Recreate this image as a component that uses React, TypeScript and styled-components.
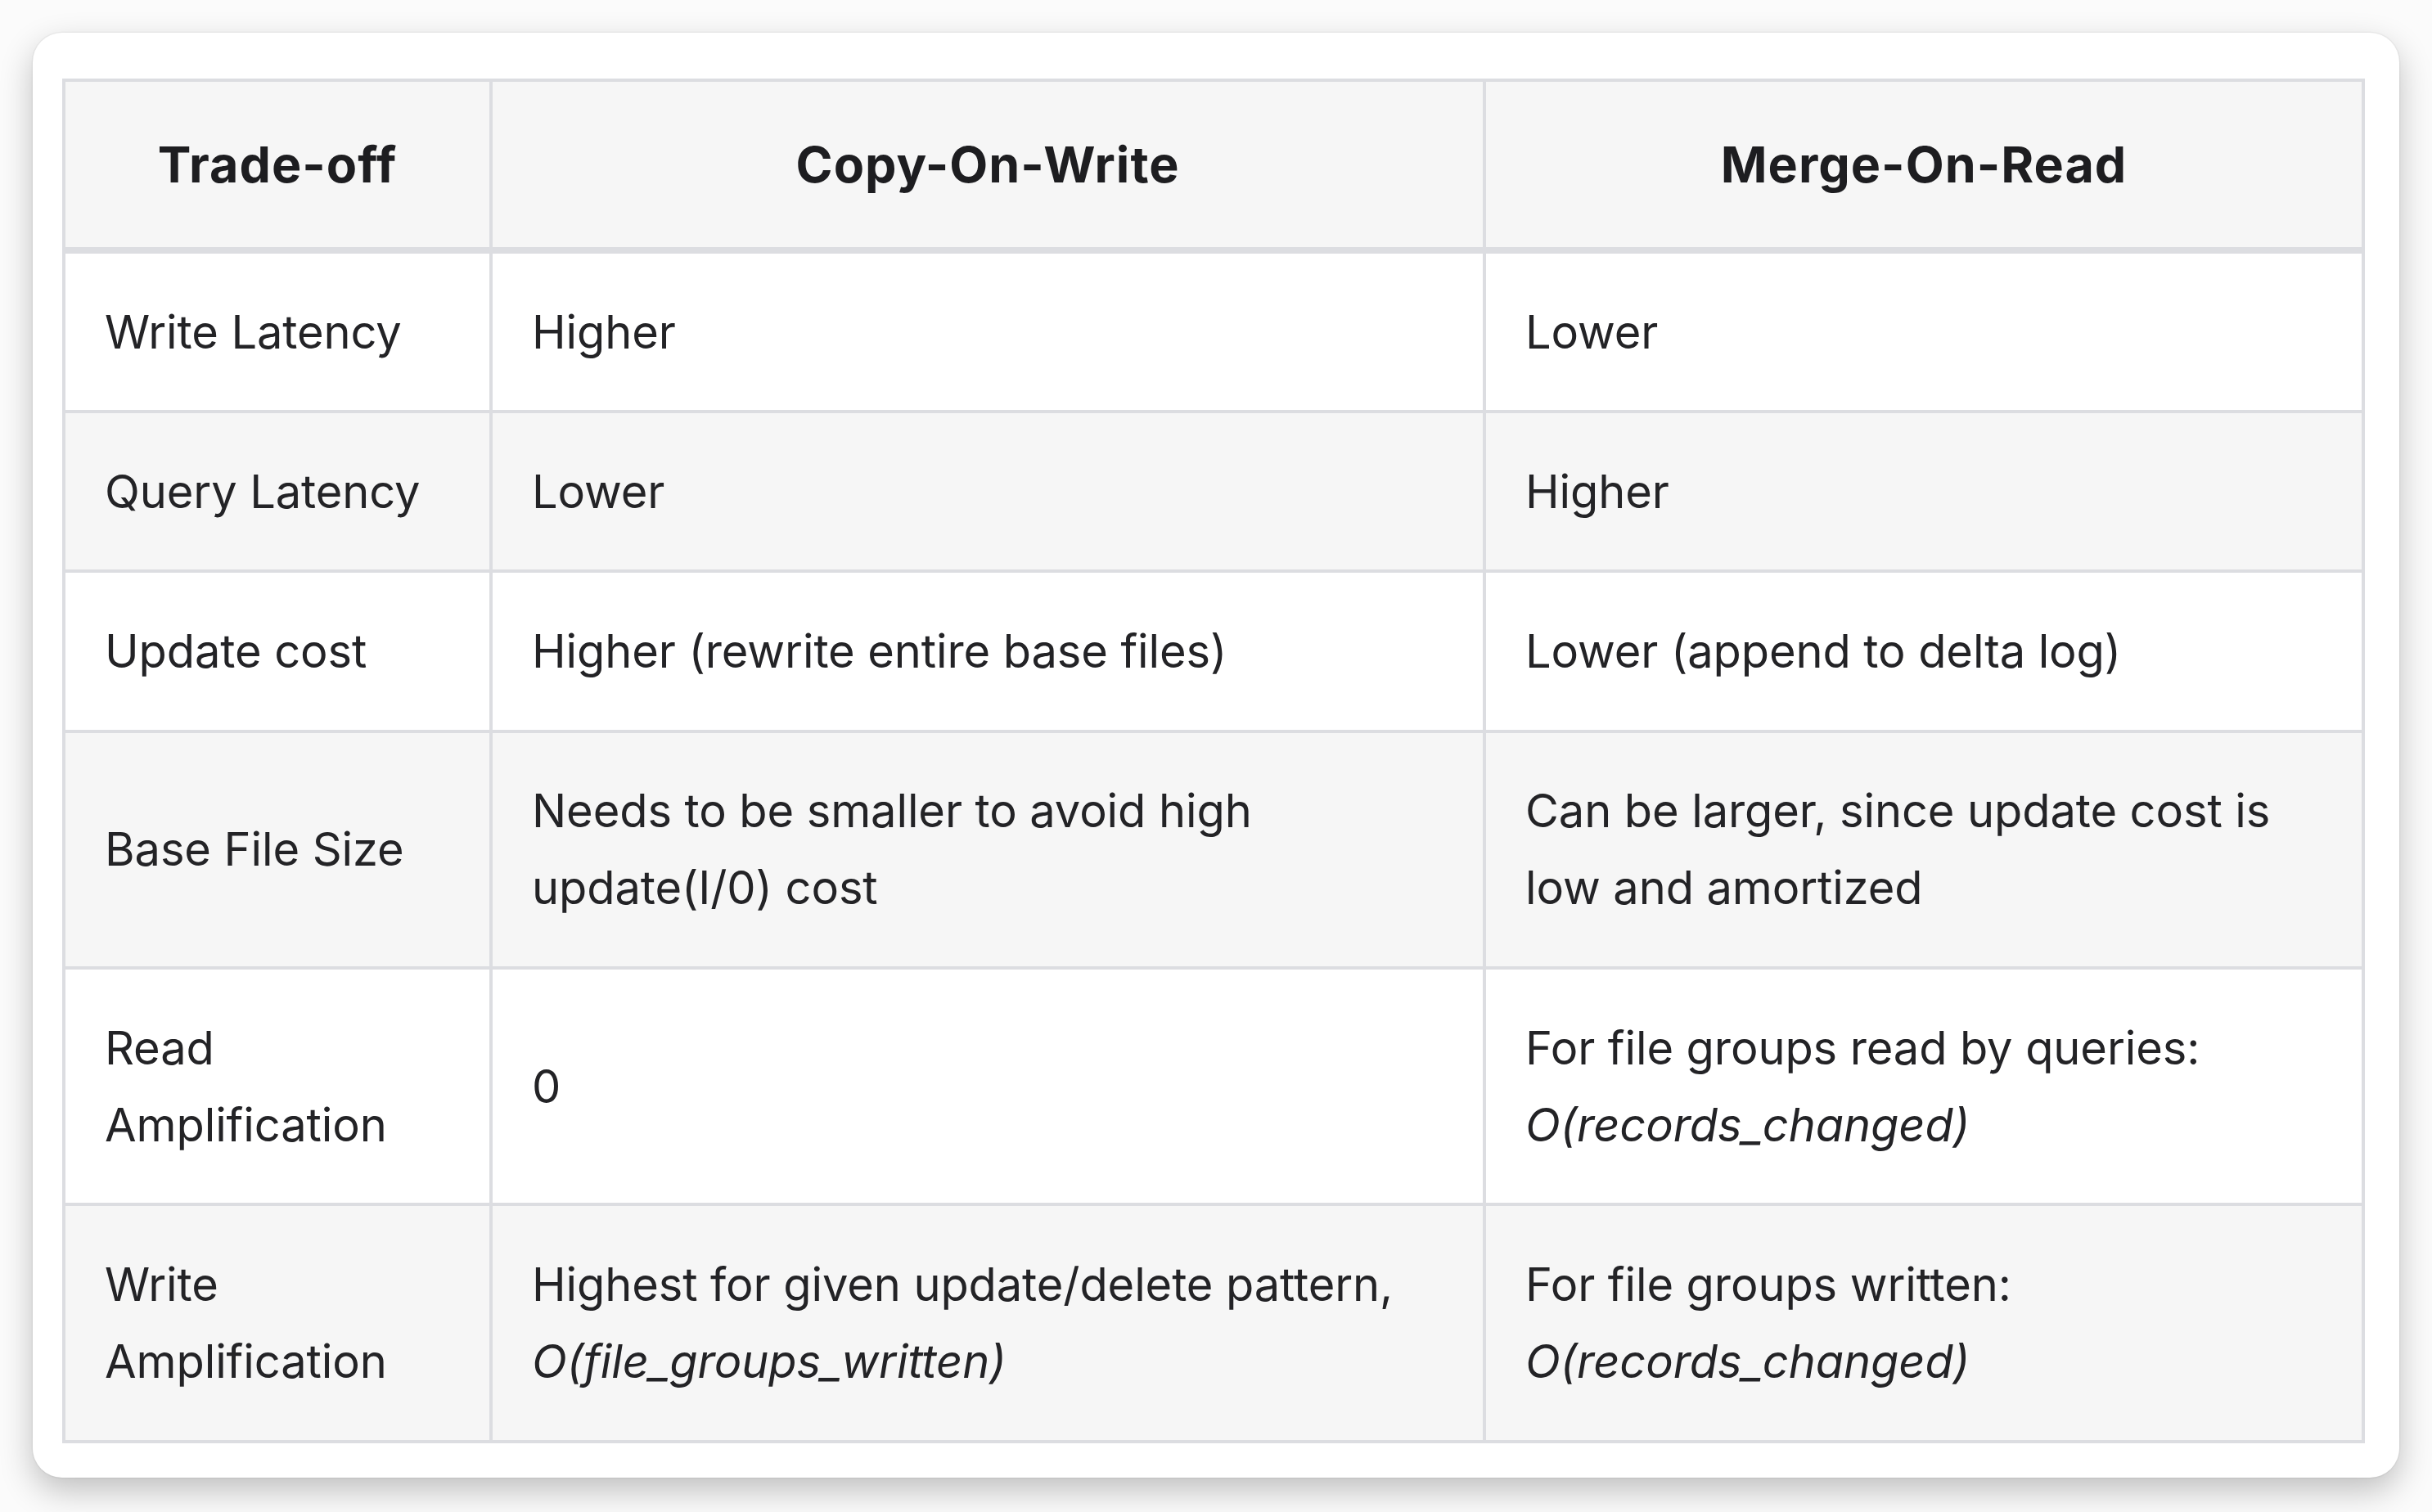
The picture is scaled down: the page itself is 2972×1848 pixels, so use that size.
import React from "react";
import styled, { createGlobalStyle } from "styled-components";

const GlobalStyle = createGlobalStyle`
  html, body {
    margin: 0;
    padding: 0;
    background: #fbfbfb;
  }
  body {
    font-family: Inter, "Noto Sans", "Liberation Sans", sans-serif;
    color: #1f1f22;
  }
`;

const Page = styled.div`
  width: 2972px;
  height: 1848px;
  box-sizing: border-box;
  padding: 40px 40px 0 40px;
`;

const Card = styled.div`
  width: 2892px;
  height: 1766px;
  box-sizing: border-box;
  background: #ffffff;
  border-radius: 36px;
  padding: 56px 46px 44px 36px;
  box-shadow: 0 0 0 1.5px rgba(0, 0, 0, 0.035), 0 16px 40px rgba(0, 0, 0, 0.24);
`;

const Table = styled.table`
  width: 2810px;
  table-layout: fixed;
  border-collapse: collapse;
  border: 4px solid #dcdde1;
`;

const HeadCell = styled.th`
  background: #f6f6f6;
  border: 4px solid #dcdde1;
  border-bottom-width: 8px;
  padding: 49px 48px;
  font-size: 61px;
  line-height: 104px;
  font-weight: 700;
  text-align: center;
  color: #1d1d20;
  letter-spacing: 1px;
`;

const Row = styled.tr<{ $shaded: boolean }>`
  background: ${(p) => (p.$shaded ? "#f6f6f6" : "#ffffff")};
`;

const Cell = styled.td`
  border: 4px solid #dcdde1;
  padding: 48.5px 48px;
  font-size: 56px;
  line-height: 94.2px;
  font-weight: 400;
  vertical-align: middle;
  color: #232326;
  letter-spacing: -0.1px;
`;

const Formula = styled.em`
  font-style: italic;
`;

type RowData = { label: React.ReactNode; cow: React.ReactNode; mor: React.ReactNode };

const rows: RowData[] = [
  { label: "Write Latency", cow: "Higher", mor: "Lower" },
  { label: "Query Latency", cow: "Lower", mor: "Higher" },
  {
    label: "Update cost",
    cow: "Higher (rewrite entire base files)",
    mor: "Lower (append to delta log)",
  },
  {
    label: "Base File Size",
    cow: (
      <>
        Needs to be smaller to avoid high
        <br />
        update(I/0) cost
      </>
    ),
    mor: (
      <>
        Can be larger, since update cost is
        <br />
        low and amortized
      </>
    ),
  },
  {
    label: (
      <>
        Read
        <br />
        Amplification
      </>
    ),
    cow: "0",
    mor: (
      <>
        For file groups read by queries:
        <br />
        <Formula>O(records_changed)</Formula>
      </>
    ),
  },
  {
    label: (
      <>
        Write
        <br />
        Amplification
      </>
    ),
    cow: (
      <>
        Highest for given update/delete pattern,
        <br />
        <Formula>O(file_groups_written)</Formula>
      </>
    ),
    mor: (
      <>
        For file groups written:
        <br />
        <Formula>O(records_changed)</Formula>
      </>
    ),
  },
];

export default function App() {
  return (
    <>
      <GlobalStyle />
      <Page>
        <Card>
          <Table>
            <colgroup>
              <col style={{ width: 522 }} />
              <col style={{ width: 1214 }} />
              <col style={{ width: 1074 }} />
            </colgroup>
            <thead>
              <tr>
                <HeadCell>Trade-off</HeadCell>
                <HeadCell>Copy-On-Write</HeadCell>
                <HeadCell>Merge-On-Read</HeadCell>
              </tr>
            </thead>
            <tbody>
              {rows.map((r, i) => (
                <Row key={i} $shaded={i % 2 === 1}>
                  <Cell>{r.label}</Cell>
                  <Cell>{r.cow}</Cell>
                  <Cell>{r.mor}</Cell>
                </Row>
              ))}
            </tbody>
          </Table>
        </Card>
      </Page>
    </>
  );
}
